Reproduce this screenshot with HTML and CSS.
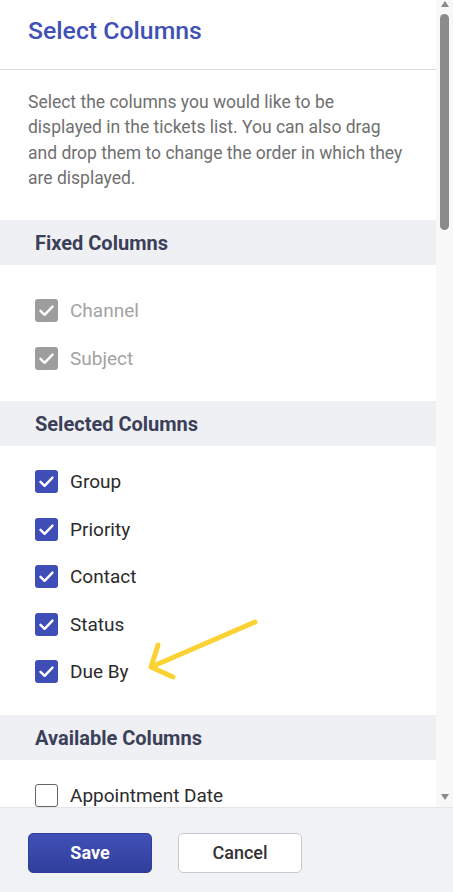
FILE: index.html
```html
<!DOCTYPE html>
<html>
<head>
<meta charset="utf-8">
<link rel="stylesheet" href="styles.css">
</head>
<body>
<div class="panel">
  <div class="main">
    <div class="content">
      <div class="header"><h1 class="title">Select Columns</h1></div>
      <p class="desc">Select the columns you would like to be displayed in the tickets list. You can also drag and drop them to change the order in which they are displayed.</p>

      <div class="section-head">Fixed Columns</div>
      <ul class="list list-fixed">
        <li class="row disabled"><span class="box checked"><svg viewBox="0 0 23 23"><path d="M5.5 11.8 L9.6 15.8 L17.5 7.6"/></svg></span><span class="label">Channel</span></li>
        <li class="row disabled"><span class="box checked"><svg viewBox="0 0 23 23"><path d="M5.5 11.8 L9.6 15.8 L17.5 7.6"/></svg></span><span class="label">Subject</span></li>
      </ul>

      <div class="section-head">Selected Columns</div>
      <ul class="list">
        <li class="row"><span class="box checked"><svg viewBox="0 0 23 23"><path d="M5.5 11.8 L9.6 15.8 L17.5 7.6"/></svg></span><span class="label">Group</span></li>
        <li class="row"><span class="box checked"><svg viewBox="0 0 23 23"><path d="M5.5 11.8 L9.6 15.8 L17.5 7.6"/></svg></span><span class="label">Priority</span></li>
        <li class="row"><span class="box checked"><svg viewBox="0 0 23 23"><path d="M5.5 11.8 L9.6 15.8 L17.5 7.6"/></svg></span><span class="label">Contact</span></li>
        <li class="row"><span class="box checked"><svg viewBox="0 0 23 23"><path d="M5.5 11.8 L9.6 15.8 L17.5 7.6"/></svg></span><span class="label">Status</span></li>
        <li class="row"><span class="box checked"><svg viewBox="0 0 23 23"><path d="M5.5 11.8 L9.6 15.8 L17.5 7.6"/></svg></span><span class="label">Due By</span></li>
      </ul>

      <div class="section-head">Available Columns</div>
      <ul class="list">
        <li class="row"><span class="box"></span><span class="label">Appointment Date</span></li>
      </ul>

      <svg class="annotation" width="120" height="70" viewBox="140 614 120 70">
        <path d="M255 622 L151 667 M158 645 L151 667 L173 677"/>
      </svg>
    </div>
    <div class="scrollbar">
      <span class="arrow-up"></span>
      <span class="thumb"></span>
      <span class="track-fill"></span>
      <span class="arrow-down"></span>
    </div>
  </div>
  <div class="footer">
    <button class="btn btn-primary">Save</button>
    <button class="btn btn-secondary">Cancel</button>
  </div>
</div>
</body>
</html>
```

FILE: styles.css
```css
* { box-sizing: border-box; }
html, body { margin: 0; padding: 0; }
body {
  width: 453px;
  height: 892px;
  overflow: hidden;
  background: #ffffff;
  font-family: Roboto, "Liberation Sans", sans-serif;
}
.panel {
  display: flex;
  flex-direction: column;
  height: 892px;
}
.main {
  display: flex;
  height: 807px;
  overflow: hidden;
}
.content {
  position: relative;
  width: 436px;
  overflow: hidden;
}
.header {
  height: 70px;
  border-bottom: 1px solid #d9d9d9;
  padding: 15px 28px 0;
}
.title {
  margin: 0;
  font-size: 24.8px;
  font-weight: 500;
  color: #3f51b5;
  line-height: 32px;
}
.desc {
  margin: 0;
  padding: 20px 32px 0 28px;
  font-size: 17.5px;
  line-height: 25.4px;
  color: #707070;
  height: 150px;
}
.section-head {
  height: 45px;
  background: #eef0f4;
  padding-left: 35px;
  display: flex;
  align-items: center;
  font-size: 20px;
  font-weight: 700;
  color: #3b3f58;
}
.list {
  list-style: none;
  margin: 0;
  padding: 12px 0 19.5px;
}
.list-fixed { padding: 22px 0 19px; }
.row {
  height: 47.5px;
  display: flex;
  align-items: center;
  padding-left: 35px;
}
.box {
  width: 23px;
  height: 23px;
  border-radius: 3px;
  border: 1.5px solid #666;
  background: #fff;
  display: flex;
  flex-shrink: 0;
  margin-right: 12px;
}
.box.checked {
  border: none;
  background: #3f4db7;
}
.box svg { width: 23px; height: 23px; }
.box path {
  fill: none;
  stroke: #fff;
  stroke-width: 2.4;
  stroke-linecap: round;
  stroke-linejoin: round;
}
.disabled .box.checked { background: #9d9d9d; }
.label {
  font-size: 19px;
  color: #2b2b2b;
}
.disabled .label { color: #a3a3a3; }
.annotation {
  position: absolute;
  left: 140px;
  top: 614px;
  pointer-events: none;
}
.annotation path {
  fill: none;
  stroke: #fbd233;
  stroke-width: 5;
  stroke-linecap: round;
  stroke-linejoin: round;
}
.scrollbar {
  width: 17px;
  background: #f8f8f8;
  display: flex;
  flex-direction: column;
  align-items: center;
}
.arrow-up {
  margin-top: 1px;
  width: 0; height: 0;
  border-left: 4.5px solid transparent;
  border-right: 4.5px solid transparent;
  border-bottom: 6px solid #8a8a8a;
}
.thumb {
  margin-top: 7px;
  width: 9px;
  height: 216px;
  border-radius: 5px;
  background: #8b8b8b;
}
.track-fill { flex: 1; }
.arrow-down {
  margin-bottom: 7px;
  width: 0; height: 0;
  border-left: 4.5px solid transparent;
  border-right: 4.5px solid transparent;
  border-top: 6px solid #8a8a8a;
}
.footer {
  height: 85px;
  background: #f1f2f6;
  border-top: 1px solid #e4e5ea;
  display: flex;
  align-items: flex-start;
  gap: 26px;
  padding: 25px 28px 0;
}
.btn {
  width: 124px;
  height: 40px;
  padding: 0;
  border-radius: 5px;
  font-family: Roboto, "Liberation Sans", sans-serif;
  font-size: 18px;
  line-height: 38px;
  cursor: pointer;
}
.btn-primary {
  border: 1px solid #2f3d98;
  background: linear-gradient(#4150b6, #303f9c);
  color: #fff;
  font-weight: 700;
}
.btn-secondary {
  border: 1px solid #c7c9d1;
  background: #ffffff;
  color: #333;
  font-weight: 500;
}
```
